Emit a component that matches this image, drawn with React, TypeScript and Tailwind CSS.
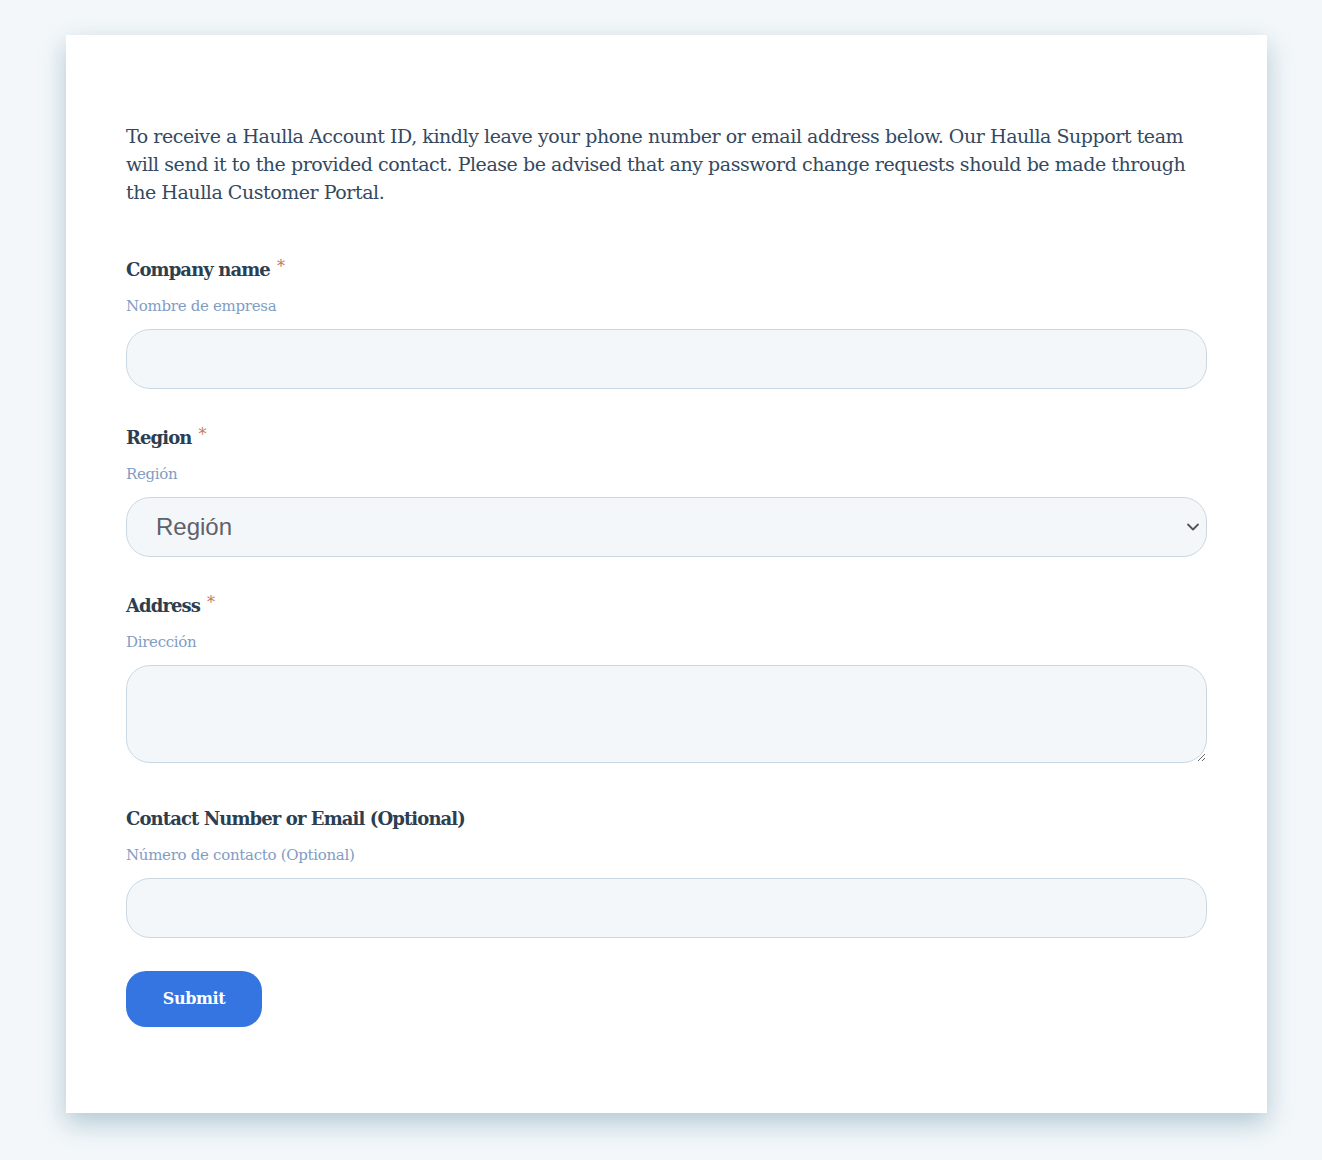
import React from "react";

const serif = { fontFamily: '"DejaVu Serif", "Liberation Serif", serif' };

function Label({ text, required }: { text: string; required?: boolean }) {
  return (
    <div className="flex items-start h-[24px] text-[18px] leading-[24px] font-bold text-[#2c3e50] tracking-[-0.9px]">
      <span>{text}</span>
      {required && (
        <span className="ml-[7px] mt-[1px] text-[16px] leading-[16px] font-normal text-[#c07a5a]">*</span>
      )}
    </div>
  );
}

function Sub({ text }: { text: string }) {
  return (
    <div className="mt-[12px] mb-[11px] h-[24px] text-[15px] leading-[24px] text-[#7f9dc3] tracking-[-0.3px]">
      {text}
    </div>
  );
}

export default function App() {
  return (
    <div className="min-h-[1160px] bg-[#f3f7fa] pt-[35px] pb-[47px]" style={serif}>
      <div className="ml-[66px] w-[1201px] bg-white shadow-[0_10px_24px_rgba(100,145,165,0.45)] px-[60px] pt-[87px] pb-[86px]">
        <p className="text-[19px] leading-[28px] text-[#34495e] tracking-[-0.45px]">
          To receive a Haulla Account ID, kindly leave your phone number or email address below. Our Haulla Support team will send it to the provided contact. Please be advised that any password change requests should be made through the Haulla Customer Portal.
        </p>

        <div className="mt-[52px]">
          <Label text="Company name" required />
          <Sub text="Nombre de empresa" />
          <input className="block w-full h-[60px] rounded-[24px] border border-[#cad8e4] bg-[#f3f7fa] outline-none px-[28px]" />
        </div>

        <div className="mt-[37px]">
          <Label text="Region" required />
          <Sub text="Región" />
          <div className="relative">
            <select
              className="block w-full h-[60px] rounded-[24px] border border-[#cad8e4] bg-[#f3f7fa] outline-none pl-[29px] appearance-none text-[24px] text-[#60606a]"
              style={{ fontFamily: '"Liberation Sans", Arial, sans-serif' }}
              defaultValue=""
            >
              <option value="">Región</option>
            </select>
            <svg className="absolute right-[7px] top-[23px] pointer-events-none" width="14" height="14" viewBox="0 0 14 14">
              <path d="M2 4.5 L7 9.5 L12 4.5" fill="none" stroke="#55505a" strokeWidth="1.8" strokeLinecap="round" strokeLinejoin="round" />
            </svg>
          </div>
        </div>

        <div className="mt-[37px]">
          <Label text="Address" required />
          <Sub text="Dirección" />
          <textarea className="block w-full h-[98px] rounded-[24px] border border-[#cad8e4] bg-[#f3f7fa] outline-none px-[28px] py-[14px]" />
        </div>

        <div className="mt-[44px]">
          <Label text="Contact Number or Email (Optional)" />
          <Sub text="Número de contacto (Optional)" />
          <input className="block w-full h-[60px] rounded-[24px] border border-[#cad8e4] bg-[#f3f7fa] outline-none px-[28px]" />
        </div>

        <button className="mt-[33px] w-[136px] h-[56px] rounded-[20px] bg-[#3575e2] text-white text-[16px] font-bold tracking-[-0.4px]">
          Submit
        </button>
      </div>
    </div>
  );
}
